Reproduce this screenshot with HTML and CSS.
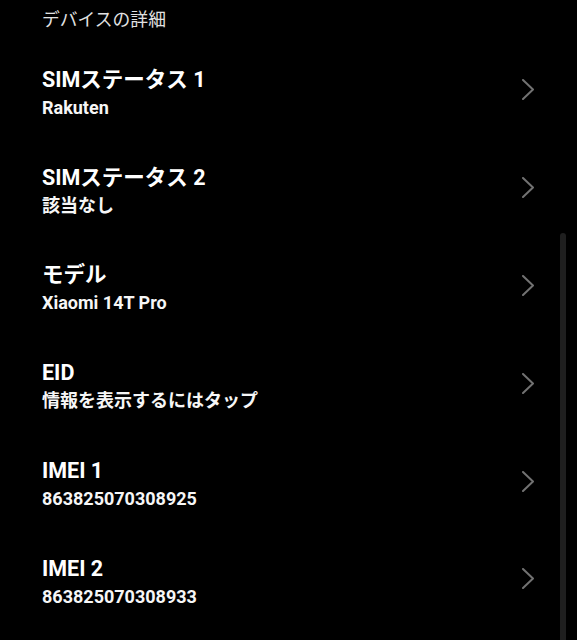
FILE: index.html
```html
<!DOCTYPE html>
<html lang="ja">
<head>
<meta charset="utf-8">
<link rel="stylesheet" href="styles.css">
</head>
<body>
<div class="screen">
  <div class="header">デバイスの詳細</div>
  <div class="list">
    <div class="row">
      <div class="texts"><div class="title">SIMステータス 1</div><div class="sub">Rakuten</div></div>
      <svg class="chev" viewBox="0 0 12 21" width="12" height="21"><polyline points="1,1 11,10.5 1,20"/></svg>
    </div>
    <div class="row">
      <div class="texts"><div class="title">SIMステータス 2</div><div class="sub">該当なし</div></div>
      <svg class="chev" viewBox="0 0 12 21" width="12" height="21"><polyline points="1,1 11,10.5 1,20"/></svg>
    </div>
    <div class="row">
      <div class="texts"><div class="title">モデル</div><div class="sub">Xiaomi 14T Pro</div></div>
      <svg class="chev" viewBox="0 0 12 21" width="12" height="21"><polyline points="1,1 11,10.5 1,20"/></svg>
    </div>
    <div class="row">
      <div class="texts"><div class="title">EID</div><div class="sub">情報を表示するにはタップ</div></div>
      <svg class="chev" viewBox="0 0 12 21" width="12" height="21"><polyline points="1,1 11,10.5 1,20"/></svg>
    </div>
    <div class="row">
      <div class="texts"><div class="title">IMEI 1</div><div class="sub">863825070308925</div></div>
      <svg class="chev" viewBox="0 0 12 21" width="12" height="21"><polyline points="1,1 11,10.5 1,20"/></svg>
    </div>
    <div class="row">
      <div class="texts"><div class="title">IMEI 2</div><div class="sub">863825070308933</div></div>
      <svg class="chev" viewBox="0 0 12 21" width="12" height="21"><polyline points="1,1 11,10.5 1,20"/></svg>
    </div>
  </div>
  <div class="scrollbar"></div>
</div>
</body>
</html>
```
FILE: styles.css
```css
html, body {
  margin: 0;
  padding: 0;
  background: #000;
}
.screen {
  position: relative;
  width: 577px;
  height: 640px;
  overflow: hidden;
  background: #000;
  font-family: Roboto, "Noto Sans CJK JP", sans-serif;
  color: #fff;
}
.header {
  font-family: "Noto Sans CJK JP", sans-serif;
  font-size: 17.8px;
  line-height: 24px;
  color: #e2e2e2;
  padding: 6px 0 0 42px;
  height: 24px;
  margin-bottom: 14px;
}
.list {
  display: flex;
  flex-direction: column;
}
.row {
  display: flex;
  align-items: center;
  height: 97.8px;
  padding: 0 43px 0 42px;
}
.texts {
  flex: 1;
  display: flex;
  flex-direction: column;
}
.title {
  font-size: 21.5px;
  line-height: 28px;
  font-weight: 700;
  color: #fff;
}
.sub {
  font-size: 18px;
  line-height: 24px;
  font-weight: 700;
  color: #f6f6f6;
  margin-top: 2px;
}
.chev {
  margin-bottom: 6px;
  flex-shrink: 0;
}
.chev polyline {
  fill: none;
  stroke: #727272;
  stroke-width: 2;
  stroke-linecap: round;
  stroke-linejoin: round;
}
.scrollbar {
  position: absolute;
  left: 560px;
  top: 233px;
  width: 6px;
  height: 420px;
  border-radius: 3px;
  background: #1f1f1f;
}
```
